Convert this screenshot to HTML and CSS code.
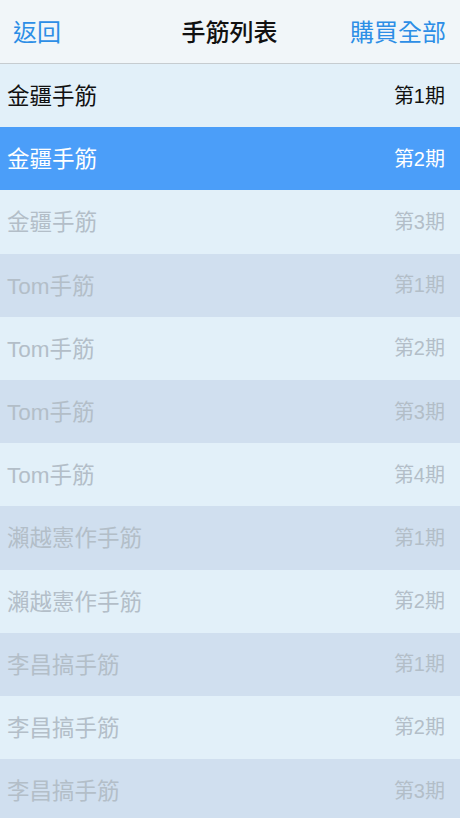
FILE: index.html
```html
<!DOCTYPE html>
<html lang="zh-Hant">
<head>
  <meta charset="UTF-8">
  <meta name="viewport" content="width=device-width, initial-scale=1.0">
  <title>手筋列表</title>
  <link rel="stylesheet" href="styles.css">
</head>
<body>
  <header class="navbar">
    <a class="nav-link back" href="#">返回</a>
    <h1 class="nav-title">手筋列表</h1>
    <a class="nav-link buy-all" href="#">購買全部</a>
  </header>
  <ul class="list">
    <li class="row light owned"><span class="name">金疆手筋</span><span class="issue">第1期</span></li>
    <li class="row selected"><span class="name">金疆手筋</span><span class="issue">第2期</span></li>
    <li class="row light"><span class="name">金疆手筋</span><span class="issue">第3期</span></li>
    <li class="row dark"><span class="name">Tom手筋</span><span class="issue">第1期</span></li>
    <li class="row light"><span class="name">Tom手筋</span><span class="issue">第2期</span></li>
    <li class="row dark"><span class="name">Tom手筋</span><span class="issue">第3期</span></li>
    <li class="row light"><span class="name">Tom手筋</span><span class="issue">第4期</span></li>
    <li class="row dark"><span class="name">瀨越憲作手筋</span><span class="issue">第1期</span></li>
    <li class="row light"><span class="name">瀨越憲作手筋</span><span class="issue">第2期</span></li>
    <li class="row dark"><span class="name">李昌搞手筋</span><span class="issue">第1期</span></li>
    <li class="row light"><span class="name">李昌搞手筋</span><span class="issue">第2期</span></li>
    <li class="row dark"><span class="name">李昌搞手筋</span><span class="issue">第3期</span></li>
  </ul>
</body>
</html>
```

FILE: styles.css
```css
body {
  margin: 0;
  font-family: "Liberation Sans", "Noto Sans CJK TC", sans-serif;
  background-color: #d0e0ef;
  overflow: hidden;
}
.navbar {
  height: 64px;
  display: grid;
  grid-template-columns: 1fr auto 1fr;
  align-items: center;
  padding: 0 14px 2px 13px;
  box-sizing: border-box;
  background-color: #f1f6f9;
  border-bottom: 1px solid #c6ccd0;
}
.nav-link {
  color: #2d8ee6;
  text-decoration: none;
  font-size: 24px;
}
.buy-all {
  justify-self: end;
}
.nav-title {
  margin: 0;
  font-size: 24px;
  font-weight: 500;
  color: #111;
}
.list {
  list-style: none;
  margin: 0;
  padding: 0;
}
.row {
  height: 63.2px;
  display: flex;
  align-items: center;
  justify-content: space-between;
  padding: 0 15px 3px 7px;
  box-sizing: border-box;
  color: #b3bec8;
}
.row.light {
  background-color: #e2f0f9;
}
.row.dark {
  background-color: #d0dfef;
}
.row.selected {
  background-color: #4b9ef9;
  color: #fff;
}
.row.owned {
  color: #111;
}
.name {
  font-size: 22.5px;
}
.issue {
  font-size: 20px;
}
```
